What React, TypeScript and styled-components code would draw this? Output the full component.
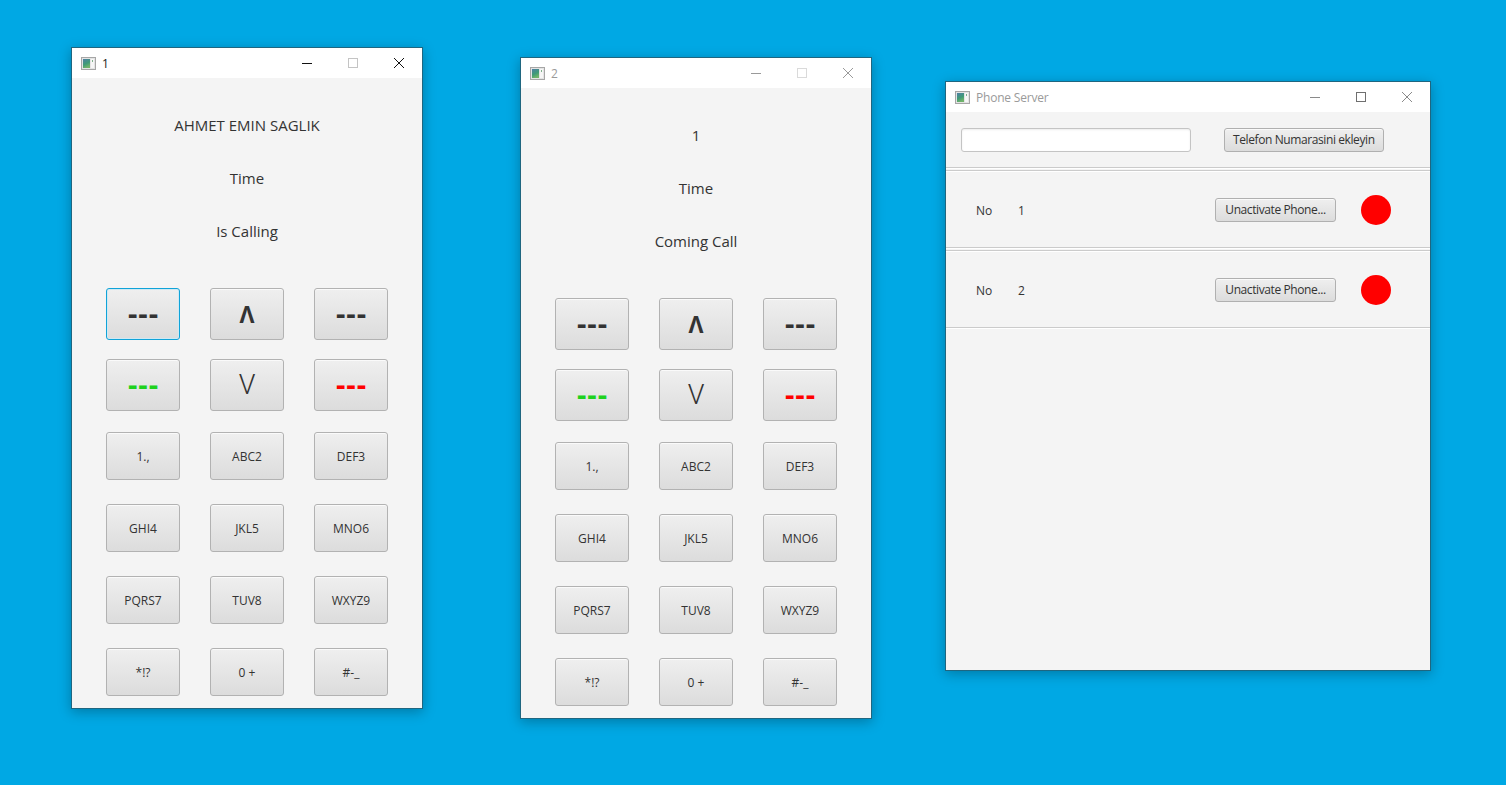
import React from 'react';
import styled, { createGlobalStyle, css } from 'styled-components';

const Global = createGlobalStyle`
  html, body { margin: 0; padding: 0; }
  body {
    width: 1506px; height: 785px; overflow: hidden;
    background: #00a8e4;
    font-family: "Open Sans", "Noto Sans", sans-serif;
  }
`;

const Desktop = styled.div`
  position: relative;
  width: 1506px;
  height: 785px;
  background: #00a8e4;
`;

const Win = styled.div<{ $x: number; $y: number; $w: number; $h: number }>`
  position: absolute;
  left: ${p => p.$x}px;
  top: ${p => p.$y}px;
  width: ${p => p.$w}px;
  height: ${p => p.$h}px;
  box-sizing: border-box;
  border: 1px solid #1f6680;
  background: #f4f4f4;
  display: flex;
  flex-direction: column;
  box-shadow: 0 3px 12px rgba(0, 0, 0, 0.28);
`;

const TitleBar = styled.div`
  flex: none;
  height: 30px;
  background: #ffffff;
  display: flex;
  align-items: center;
`;

const TitleIconBox = styled.span`
  display: flex;
  margin-left: 9px;
`;

const TitleText = styled.span<{ $active?: boolean }>`
  flex: 1;
  margin-left: 6px;
  font-size: 12px;
  color: ${p => (p.$active ? '#1a1a1a' : '#9a9a9a')};
  font-family: "Open Sans", sans-serif;
  letter-spacing: -0.2px;
`;

const Ctrl = styled.span<{ $color: string }>`
  width: 46px;
  height: 30px;
  display: flex;
  align-items: center;
  justify-content: center;
  color: ${p => p.$color};
`;

const AppIcon = ({ id }: { id: string }) => (
  <svg width="15" height="13" viewBox="0 0 15 13">
    <defs>
      <linearGradient id={id} x1="0" y1="0" x2="0.4" y2="1">
        <stop offset="0" stopColor="#4f7fa6" />
        <stop offset="0.6" stopColor="#3f9a77" />
        <stop offset="1" stopColor="#6fb36a" />
      </linearGradient>
    </defs>
    <rect x="0.5" y="0.5" width="14" height="12" fill="#e4e4e4" stroke="#a6a6a6" />
    <rect x="2" y="2" width="7" height="9" fill={`url(#${id})`} />
    <rect x="10" y="2" width="3" height="9" fill="#f6f6f6" />
    <rect x="11" y="3" width="1" height="2" fill="#7fb08a" />
  </svg>
);

const MinGlyph = () => (
  <svg width="10" height="10" viewBox="0 0 10 10">
    <line x1="0" y1="5.5" x2="10" y2="5.5" stroke="currentColor" strokeWidth="1" />
  </svg>
);
const MaxGlyph = () => (
  <svg width="10" height="10" viewBox="0 0 10 10">
    <rect x="0.5" y="0.5" width="9" height="9" fill="none" stroke="currentColor" strokeWidth="1" />
  </svg>
);
const CloseGlyph = () => (
  <svg width="10" height="10" viewBox="0 0 10 10">
    <path d="M0 0 L10 10 M10 0 L0 10" stroke="currentColor" strokeWidth="1" />
  </svg>
);

type WinColors = { min: string; max: string; close: string };

const Title = ({ text, active, id, colors }: { text: string; active?: boolean; id: string; colors: WinColors }) => (
  <TitleBar>
    <TitleIconBox>
      <AppIcon id={id} />
    </TitleIconBox>
    <TitleText $active={active}>{text}</TitleText>
    <Ctrl $color={colors.min}><MinGlyph /></Ctrl>
    <Ctrl $color={colors.max}><MaxGlyph /></Ctrl>
    <Ctrl $color={colors.close}><CloseGlyph /></Ctrl>
  </TitleBar>
);

/* ---------- phone ---------- */

const PhoneBody = styled.div`
  flex: 1;
  display: flex;
  flex-direction: column;
  align-items: center;
`;

const InfoStack = styled.div`
  height: 200px;
  box-sizing: border-box;
  padding-top: 37px;
  display: flex;
  flex-direction: column;
  align-items: center;
  gap: 33px;
`;

const InfoLabel = styled.div`
  font-size: 15px;
  line-height: 20px;
  color: #333333;
`;

const Keypad = styled.div`
  display: grid;
  grid-template-columns: repeat(3, 74px);
  grid-template-rows: 71px 71px 72px 72px 72px 72px;
  column-gap: 30px;
  align-items: center;
`;

const Key = styled.div<{ $tall?: boolean; $focused?: boolean; $kind?: 'dash' | 'up' | 'down'; $color?: string }>`
  box-sizing: border-box;
  height: ${p => (p.$tall ? 52 : 48)}px;
  border: 1px solid #b2b2b2;
  border-radius: 3px;
  background: linear-gradient(#efefef, #dcdcdc);
  box-shadow: inset 0 1px 0 rgba(255, 255, 255, 0.7);
  display: flex;
  align-items: center;
  justify-content: center;
  font-size: 12px;
  color: ${p => p.$color || '#333333'};
  ${p =>
    p.$focused &&
    css`
      border-color: #10a3d8;
      box-shadow: inset 0 0 0 1px #cfe9f4;
    `}
  ${p =>
    p.$kind === 'dash' &&
    css`
      font-family: "DejaVu Sans", sans-serif;
      font-size: 25px;
      font-weight: 700;
      letter-spacing: 0px;
      padding-top: 2px;
    `}
  ${p =>
    p.$kind === 'up' &&
    css`
      font-size: 23px;
      font-weight: 700;
    `}
  ${p =>
    p.$kind === 'down' &&
    css`
      font-family: "Roboto", sans-serif;
      font-size: 27px;
      font-weight: 300;
    `}
`;

type KeyDef = { label: string; kind?: 'dash' | 'up' | 'down'; color?: string; focused?: boolean };

const PhoneWindow = ({ id, title, active, lines, focusFirst, x, y, colors }: {
  id: string; title: string; active?: boolean; lines: string[]; focusFirst?: boolean; x: number; y: number; colors: WinColors;
}) => {
  const keys: KeyDef[] = [
    { label: '---', kind: 'dash', focused: focusFirst },
    { label: 'Λ', kind: 'up' },
    { label: '---', kind: 'dash' },
    { label: '---', kind: 'dash', color: '#1ed21e' },
    { label: 'V', kind: 'down' },
    { label: '---', kind: 'dash', color: '#ff0000' },
    { label: '1.,' },
    { label: 'ABC2' },
    { label: 'DEF3' },
    { label: 'GHI4' },
    { label: 'JKL5' },
    { label: 'MNO6' },
    { label: 'PQRS7' },
    { label: 'TUV8' },
    { label: 'WXYZ9' },
    { label: '*!?' },
    { label: '0 +' },
    { label: '#-_' },
  ];
  return (
    <Win $x={x} $y={y} $w={352} $h={662}>
      <Title text={title} active={active} id={id} colors={colors} />
      <PhoneBody>
        <InfoStack>
          {lines.map((l, i) => (
            <InfoLabel key={i}>{l}</InfoLabel>
          ))}
        </InfoStack>
        <Keypad>
          {keys.map((k, i) => (
            <Key key={i} $tall={i < 6} $focused={k.focused} $kind={k.kind} $color={k.color}>
              {k.label}
            </Key>
          ))}
        </Keypad>
      </PhoneBody>
    </Win>
  );
};

/* ---------- server ---------- */

const ServerBody = styled.div`
  flex: 1;
  display: flex;
  flex-direction: column;
  gap: 1px;
`;

const Sep = styled.div`
  height: 0;
  border-top: 1px solid #cbcbcb;
  border-bottom: 1px solid #ffffff;
`;

const TopBar = styled.div`
  height: 55px;
  box-sizing: border-box;
  padding: 0 15px;
  display: flex;
  align-items: center;
  gap: 33px;
`;

const TextField = styled.div`
  width: 230px;
  height: 24px;
  box-sizing: border-box;
  background: #ffffff;
  border: 1px solid #c4c4c4;
  border-radius: 3px;
  box-shadow: inset 0 1px 2px rgba(0, 0, 0, 0.08);
`;

const SmallButton = styled.div<{ $w?: number }>`
  height: 24px;
  box-sizing: border-box;
  ${p => (p.$w ? `width: ${p.$w}px;` : 'padding: 0 8px;')}
  border: 1px solid #b0b0b0;
  border-radius: 3px;
  background: linear-gradient(#efefef, #dcdcdc);
  box-shadow: inset 0 1px 0 rgba(255, 255, 255, 0.7);
  display: flex;
  align-items: center;
  justify-content: center;
  font-size: 12px;
  color: #333333;
  white-space: nowrap;
  letter-spacing: -0.4px;
`;

const PhoneRow = styled.div`
  height: 75px;
  display: flex;
  align-items: center;
  padding: 0 39px 0 30px;
`;

const NoLabel = styled.span`
  width: 42px;
  font-size: 12px;
  color: #333333;
  padding-top: 2px;
`;

const NumLabel = styled.span`
  flex: 1;
  font-size: 12px;
  color: #333333;
  padding-top: 2px;
`;

const StatusDot = styled.span`
  width: 30px;
  height: 30px;
  border-radius: 50%;
  background: #ff0000;
  margin-left: 25px;
`;

const RowItem = styled.div`
  display: flex;
  flex-direction: column;
`;

const ServerWindow = () => (
  <Win $x={945} $y={81} $w={486} $h={590}>
    <Title text="Phone Server" id="ic3" colors={{ min: '#8a8a8a', max: '#6f6f6f', close: '#8a8a8a' }} />
    <ServerBody>
      <RowItem>
        <TopBar>
          <TextField />
          <SmallButton>Telefon Numarasini ekleyin</SmallButton>
        </TopBar>
        <Sep />
      </RowItem>
      {['1', '2'].map(n => (
        <RowItem key={n}>
          <Sep />
          <PhoneRow>
            <NoLabel>No</NoLabel>
            <NumLabel>{n}</NumLabel>
            <SmallButton $w={121}>Unactivate Phone...</SmallButton>
            <StatusDot />
          </PhoneRow>
          <Sep />
        </RowItem>
      ))}
    </ServerBody>
  </Win>
);

export default function App() {
  return (
    <>
      <Global />
      <Desktop>
        <PhoneWindow
          id="ic1"
          title="1"
          active
          focusFirst
          x={71}
          y={47}
          lines={['AHMET EMIN SAGLIK', 'Time', 'Is Calling']}
          colors={{ min: '#111111', max: '#c4c4c4', close: '#111111' }}
        />
        <PhoneWindow
          id="ic2"
          title="2"
          x={520}
          y={57}
          lines={['1', 'Time', 'Coming Call']}
          colors={{ min: '#9a9a9a', max: '#dadada', close: '#9a9a9a' }}
        />
        <ServerWindow />
      </Desktop>
    </>
  );
}
